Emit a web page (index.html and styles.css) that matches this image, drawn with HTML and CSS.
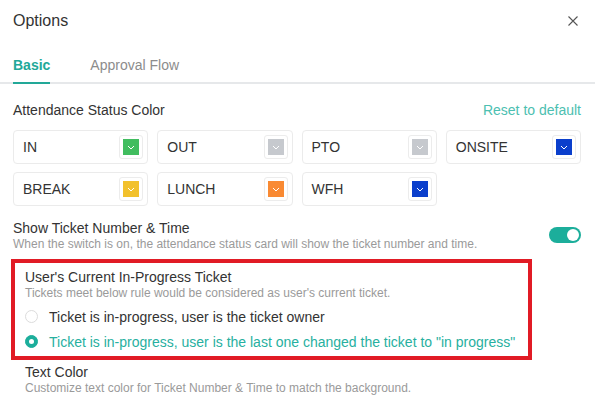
FILE: index.html
```html
<!DOCTYPE html>
<html>
<head>
<meta charset="utf-8">
<link rel="stylesheet" href="styles.css">
</head>
<body>
<div class="dialog">
  <div class="header">
    <span class="title">Options</span>
    <svg class="close" width="10" height="10" viewBox="0 0 10 10"><path d="M0.5 0.5L9.5 9.5M9.5 0.5L0.5 9.5" stroke="#555" stroke-width="1.1" fill="none"/></svg>
  </div>
  <div class="tabs">
    <div class="tab active">Basic</div>
    <div class="tab">Approval Flow</div>
  </div>
  <div class="body">
    <div class="row-head">
      <span class="label">Attendance Status Color</span>
      <span class="link">Reset to default</span>
    </div>
    <div class="grid">
      <div class="card"><span>IN</span><span class="swatch"><span class="chip c-green"><svg width="8" height="5" viewBox="0 0 8 5"><path d="M1 1L4 4L7 1" stroke="#fff" stroke-width="1" fill="none"/></svg></span></span></div>
      <div class="card"><span>OUT</span><span class="swatch"><span class="chip c-gray"><svg width="8" height="5" viewBox="0 0 8 5"><path d="M1 1L4 4L7 1" stroke="#fff" stroke-width="1" fill="none"/></svg></span></span></div>
      <div class="card"><span>PTO</span><span class="swatch"><span class="chip c-gray"><svg width="8" height="5" viewBox="0 0 8 5"><path d="M1 1L4 4L7 1" stroke="#fff" stroke-width="1" fill="none"/></svg></span></span></div>
      <div class="card"><span>ONSITE</span><span class="swatch"><span class="chip c-blue"><svg width="8" height="5" viewBox="0 0 8 5"><path d="M1 1L4 4L7 1" stroke="#fff" stroke-width="1" fill="none"/></svg></span></span></div>
      <div class="card"><span>BREAK</span><span class="swatch"><span class="chip c-yellow"><svg width="8" height="5" viewBox="0 0 8 5"><path d="M1 1L4 4L7 1" stroke="#fff" stroke-width="1" fill="none"/></svg></span></span></div>
      <div class="card"><span>LUNCH</span><span class="swatch"><span class="chip c-orange"><svg width="8" height="5" viewBox="0 0 8 5"><path d="M1 1L4 4L7 1" stroke="#fff" stroke-width="1" fill="none"/></svg></span></span></div>
      <div class="card"><span>WFH</span><span class="swatch"><span class="chip c-blue"><svg width="8" height="5" viewBox="0 0 8 5"><path d="M1 1L4 4L7 1" stroke="#fff" stroke-width="1" fill="none"/></svg></span></span></div>
    </div>
    <div class="setting">
      <div class="setting-text">
        <div class="label">Show Ticket Number &amp; Time</div>
        <div class="desc">When the switch is on, the attendance status card will show the ticket number and time.</div>
      </div>
      <div class="toggle"><span class="knob"></span></div>
    </div>
    <div class="sub">
      <div class="highlight">
        <div class="label">User's Current In-Progress Ticket</div>
        <div class="desc">Tickets meet below rule would be considered as user's current ticket.</div>
        <div class="radios">
          <div class="radio"><span class="dot"></span><span>Ticket is in-progress, user is the ticket owner</span></div>
          <div class="radio checked"><span class="dot"></span><span>Ticket is in-progress, user is the last one changed the ticket to "in progress"</span></div>
        </div>
      </div>
      <div class="label">Text Color</div>
      <div class="desc">Customize text color for Ticket Number &amp; Time to match the background.</div>
    </div>
  </div>
</div>
</body>
</html>
```
FILE: styles.css
```css
* { box-sizing: border-box; }
html, body { margin: 0; padding: 0; background: #fff; }
body { font-family: "Liberation Sans", Arial, sans-serif; color: #333; overflow: hidden; }
.dialog { width: 595px; height: 406px; }
.header { height: 41px; padding: 0 17px 0 13px; display: flex; align-items: center; justify-content: space-between; }
.title { font-size: 16px; color: #333; line-height: 20px; margin-top: 1px; }
.close { display: block; margin-top: 1px; }
.tabs { display: flex; gap: 40px; padding: 0 13px; border-bottom: 2px solid #e6e8ea; }
.tab { font-size: 14px; line-height: 20px; padding: 14px 0 7px; color: #8c8c8c; margin-bottom: -2px; border-bottom: 2px solid transparent; }
.tab.active { color: #22a898; font-weight: bold; border-bottom-color: #22a898; }
.body { padding: 16px 14px 0 13px; }
.row-head { display: flex; justify-content: space-between; align-items: center; height: 20px; }
.label { font-size: 14px; line-height: 18px; color: #333; }
.link { font-size: 14px; color: #4cc0b1; }
.grid { margin-top: 10px; display: grid; grid-template-columns: repeat(4, 1fr); gap: 8px 9px; }
.card { height: 34px; border: 1px solid #ebebeb; border-radius: 4px; display: flex; align-items: center; justify-content: space-between; padding: 0 4px 0 9px; font-size: 14px; color: #333; }
.swatch { width: 24px; height: 24px; border: 1px solid #ececec; border-radius: 3px; display: flex; align-items: center; justify-content: center; }
.chip { width: 16px; height: 16px; display: flex; align-items: center; justify-content: center; }
.chip svg { display: block; }
.c-green { background: #41bd5f; }
.c-gray { background: #c6c9ce; }
.c-blue { background: #0b3fcc; }
.c-yellow { background: #f2c12c; }
.c-orange { background: #f98a33; }
.setting { margin-top: 13px; display: flex; justify-content: space-between; align-items: center; }
.desc { font-size: 12px; line-height: 14px; color: #9a9a9a; }
.toggle { width: 32px; height: 16px; border-radius: 8px; background: #1cae9b; display: flex; align-items: center; justify-content: flex-end; padding: 0 2px; margin-top: 0; }
.knob { width: 12px; height: 12px; border-radius: 50%; background: #fff; }
.sub { padding-left: 12px; margin-top: 8px; }
.highlight { margin-left: -14px; width: 521px; border: 4px solid #e11b25; padding: 5px 12px 2px 10px; }
.radios { margin-top: 4px; }
.radio { height: 25px; display: flex; align-items: center; gap: 11px; font-size: 14px; color: #333; }
.radio .dot { width: 13px; height: 13px; border-radius: 50%; border: 1px solid #dcdcdc; background: #fff; flex: none; display: flex; align-items: center; justify-content: center; }
.radio.checked { color: #27b0a0; }
.radio.checked .dot { background: #1cae9b; border-color: #1cae9b; }
.radio.checked .dot::after { content: ""; width: 5px; height: 5px; border-radius: 50%; background: #fff; }
.highlight + .label { margin-top: 3px; }
```
